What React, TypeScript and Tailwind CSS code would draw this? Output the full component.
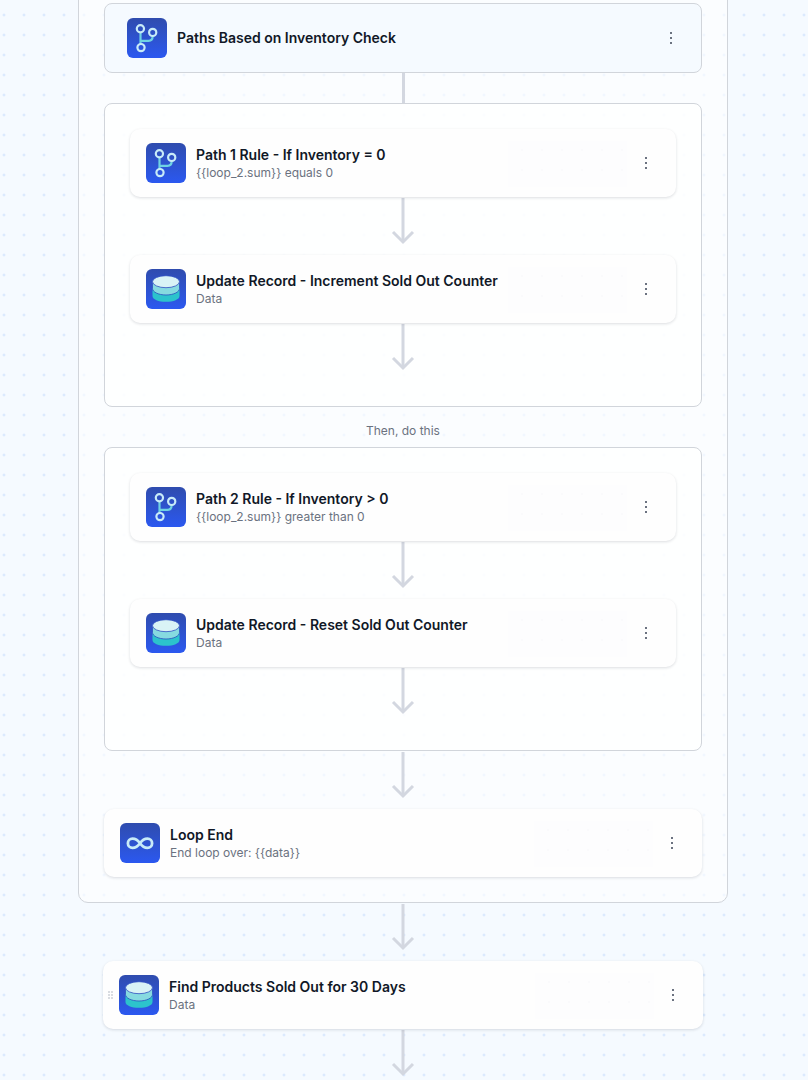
import React from "react";

function IconTile({ children }: { children: React.ReactNode }) {
  return (
    <div className="w-10 h-10 shrink-0 rounded-[6px] bg-gradient-to-b from-[#2f4cae] to-[#2b58f0] relative">
      <svg width="40" height="40" viewBox="0 0 40 40" fill="none">
        {children}
      </svg>
    </div>
  );
}

function BranchIcon() {
  return (
    <IconTile>
      <path d="M13.5 14.5V26" stroke="#6fd3e3" strokeWidth="2.200" />
      <path d="M13.5 22.8H21.5C24 22.8 25.7 21 25.7 18" stroke="#6fd3e3" strokeWidth="2.200" />
      <circle cx="13.4" cy="10.7" r="3.6" stroke="#c8ebf8" strokeWidth="2.200" />
      <circle cx="25.7" cy="14.4" r="3.6" stroke="#c8ebf8" strokeWidth="2.200" />
      <circle cx="14" cy="29.6" r="3.6" stroke="#c8ebf8" strokeWidth="2.200" />
    </IconTile>
  );
}

function DbIcon() {
  return (
    <IconTile>
      <path d="M6.500 20V27C6.500 30.500 12.500 32.800 20 32.800S33.500 30.500 33.500 27V20Z" fill="#2cc3cc" />
      <path d="M6.500 13V19.500C6.500 23 12.500 26 20 26S33.500 23 33.500 19.500V13Z" fill="#86dae0" stroke="#2f4fc0" strokeWidth="0.800" />
      <ellipse cx="20" cy="12.700" rx="13.500" ry="6" fill="#d9f3f6" stroke="#2f4fc0" strokeWidth="0.800" />
    </IconTile>
  );
}

function LoopIcon() {
  return (
    <IconTile>
      <path
        d="M20 20.300C17.800 17.100 15.800 15.700 12.500 15.700A4.600 4.600 0 0 0 12.500 24.900C15.800 24.900 17.800 23.500 20 20.300C22.200 17.100 24.200 15.700 27.500 15.700A4.600 4.600 0 0 1 27.500 24.900C24.200 24.900 22.200 23.500 20 20.300Z"
        stroke="#c8ebf8"
        strokeWidth="2.800"
        strokeLinejoin="round"
      />
    </IconTile>
  );
}

function Dots() {
  return (
    <svg width="4" height="14" viewBox="0 0 4 14" className="relative shrink-0" fill="#6b7280">
      <rect x="1" y="1" width="2" height="2" />
      <rect x="1" y="6" width="2" height="2" />
      <rect x="1" y="11" width="2" height="2" />
    </svg>
  );
}

function Arrow({ last }: { last?: boolean }) {
  return (
    <svg
      width="24"
      height="48"
      viewBox="0 0 24 48"
      fill="none"
      className={last ? "block shrink-0" : "block shrink-0 mb-[10px]"}
    >
      <path d="M12 1V45" stroke="#d3d7e0" strokeWidth="3" />
      <path d="M2 35L12 45L22 35" stroke="#d3d7e0" strokeWidth="3" />
    </svg>
  );
}

function Card({
  icon,
  title,
  sub,
  width,
  handle,
}: {
  icon: React.ReactNode;
  title: string;
  sub: string;
  width: string;
  handle?: boolean;
}) {
  return (
    <div
      className={`${width} relative h-[68px] shrink-0 flex items-center pl-[16px] pr-[28px] bg-[#fefefe] rounded-[10px] shadow-[0_1px_3px_rgba(17,24,39,0.14)]`}
    >
      {handle && (
        <div className="absolute left-[5px] top-[30px] grid grid-cols-2 gap-[1px]">
          {[0, 1, 2, 3, 4, 5].map((i) => (
            <div key={i} className="w-[2px] h-[2px] bg-[#d9dce1]" />
          ))}
        </div>
      )}
      <div className="absolute right-[49px] top-[12px] w-[119px] h-[46px] bg-[#fdfdfe] bg-[radial-gradient(circle,#fafafc_1px,transparent_1.500px)] bg-[size:20px_20px] bg-[position:4px_-1px]" />
      {icon}
      <div className="relative ml-[10px] flex-1 min-w-0">
        <div className="text-[14px] leading-[20px] font-semibold text-[#111827]">{title}</div>
        <div className="text-[12px] leading-[16px] text-[#6b7280]">{sub}</div>
      </div>
      <Dots />
    </div>
  );
}

function PathBox({ children }: { children: React.ReactNode }) {
  return (
    <div className="w-[598px] h-[304px] shrink-0 flex flex-col items-center pt-[25px] border border-[#d1d5db] rounded-[8px] bg-white/70">
      {children}
    </div>
  );
}

export default function App() {
  return (
    <div
      className="w-[808px] h-[1080px] overflow-hidden bg-[#f5faff] bg-[radial-gradient(circle,#dbeafe_1px,transparent_1.800px)] bg-[size:20px_20px] bg-[position:-6px_5px]"
      style={{ fontFamily: "Inter, 'Liberation Sans', sans-serif" }}
    >
      <div className="w-[650px] ml-[78px] -mt-[20px] flex flex-col items-center">
        <div className="w-[650px] flex flex-col items-center pt-[22px] pb-[25px] border border-[#d1d5db] rounded-[10px] bg-white/60">
          <div className="w-[598px] h-[70px] shrink-0 flex items-center pl-[22px] pr-[28px] bg-[#f5faff] border border-[#d1d5db] rounded-[8px]">
            <BranchIcon />
            <div className="ml-[10px] pb-[2px] flex-1 text-[14px] font-semibold text-[#111827]">Paths Based on Inventory Check</div>
            <Dots />
          </div>
          <div className="w-[3px] h-[30px] shrink-0 bg-[#d3d7e0]" />
          <PathBox>
            <Card icon={<BranchIcon />} title="Path 1 Rule - If Inventory = 0" sub="{{loop_2.sum}} equals 0" width="w-[546px]" />
            <Arrow />
            <Card icon={<DbIcon />} title="Update Record - Increment Sold Out Counter" sub="Data" width="w-[546px]" />
            <Arrow last />
          </PathBox>
          <div className="h-[40px] shrink-0 pt-[16px] text-[12px] leading-[16px] text-[#6b7280]">Then, do this</div>
          <PathBox>
            <Card icon={<BranchIcon />} title="Path 2 Rule - If Inventory > 0" sub="{{loop_2.sum}} greater than 0" width="w-[546px]" />
            <Arrow />
            <Card icon={<DbIcon />} title="Update Record - Reset Sold Out Counter" sub="Data" width="w-[546px]" />
            <Arrow last />
          </PathBox>
          <Arrow />
          <Card icon={<LoopIcon />} title="Loop End" sub="End loop over: {{data}}" width="w-[598px]" />
        </div>
        <Arrow />
        <Card icon={<DbIcon />} title="Find Products Sold Out for 30 Days" sub="Data" width="w-[600px]" handle />
        <Arrow last />
      </div>
    </div>
  );
}
